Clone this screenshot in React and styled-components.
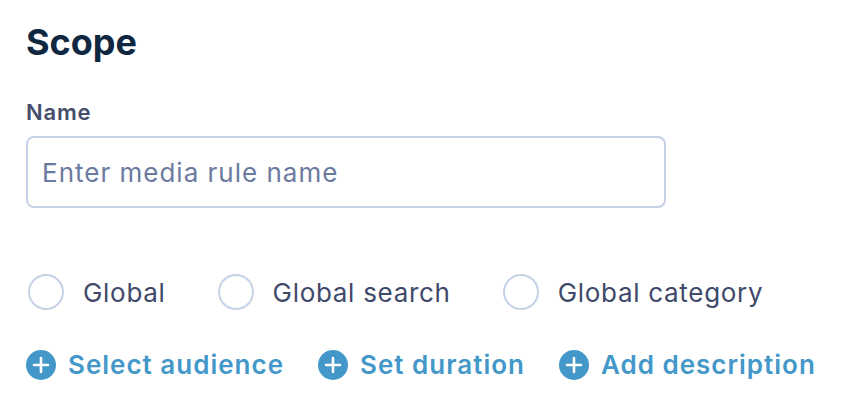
import React from "react";
import styled, { createGlobalStyle } from "styled-components";

const GlobalStyle = createGlobalStyle`
  body {
    margin: 0;
    background: #ffffff;
    font-family: Inter, "Noto Sans", sans-serif;
  }
`;

const Root = styled.div`
  padding: 20px 26px;
  display: flex;
  flex-direction: column;
`;

const Title = styled.h2`
  margin: 0;
  font-size: 36px;
  font-weight: 700;
  color: #0f2740;
  line-height: 44px;
`;

const Label = styled.label`
  margin-top: 34px;
  font-size: 22px;
  font-weight: 600;
  letter-spacing: 0.8px;
  color: #454e6b;
  line-height: 28px;
`;

const Input = styled.input`
  margin-top: 10px;
  width: 640px;
  height: 72px;
  box-sizing: border-box;
  border: 2px solid #c5d2e4;
  border-radius: 8px;
  padding: 0 14px;
  font-family: inherit;
  font-size: 26px;
  letter-spacing: 1px;
  color: #2b3550;
  outline: none;

  &::placeholder {
    color: #6b7a9f;
    opacity: 1;
  }
`;

const RadioRow = styled.div`
  margin-top: 66px;
  display: flex;
  align-items: center;
  gap: 50px;
`;

const RadioOption = styled.label`
  display: flex;
  align-items: center;
  gap: 19px;
  font-size: 26px;
  letter-spacing: 0.7px;
  color: #3f4a6a;
  cursor: pointer;
`;

const RadioCircle = styled.span`
  width: 36px;
  height: 36px;
  box-sizing: border-box;
  border: 2px solid #c5d2e4;
  border-radius: 50%;
  margin-left: 2px;
`;

const LinkRow = styled.div`
  margin-top: 39px;
  display: flex;
  align-items: center;
  gap: 34px;
`;

const AddLink = styled.button`
  display: flex;
  align-items: center;
  gap: 12px;
  border: none;
  background: none;
  padding: 0;
  font-family: inherit;
  font-size: 26px;
  font-weight: 600;
  letter-spacing: 1px;
  color: #4398c9;
  cursor: pointer;
`;

const PlusIcon = () => (
  <svg width="30" height="30" viewBox="0 0 30 30">
    <circle cx="15" cy="15" r="15" fill="#4398c9" />
    <path d="M15 8v14M8 15h14" stroke="#fff" strokeWidth="2.6" strokeLinecap="round" />
  </svg>
);

const SCOPES = ["Global", "Global search", "Global category"];
const ACTIONS = ["Select audience", "Set duration", "Add description"];

const App = () => (
  <>
    <GlobalStyle />
    <Root>
      <Title>Scope</Title>
      <Label>Name</Label>
      <Input placeholder="Enter media rule name" />
      <RadioRow>
        {SCOPES.map((scope) => (
          <RadioOption key={scope}>
            <RadioCircle />
            {scope}
          </RadioOption>
        ))}
      </RadioRow>
      <LinkRow>
        {ACTIONS.map((action) => (
          <AddLink key={action}>
            <PlusIcon />
            {action}
          </AddLink>
        ))}
      </LinkRow>
    </Root>
  </>
);

export default App;
